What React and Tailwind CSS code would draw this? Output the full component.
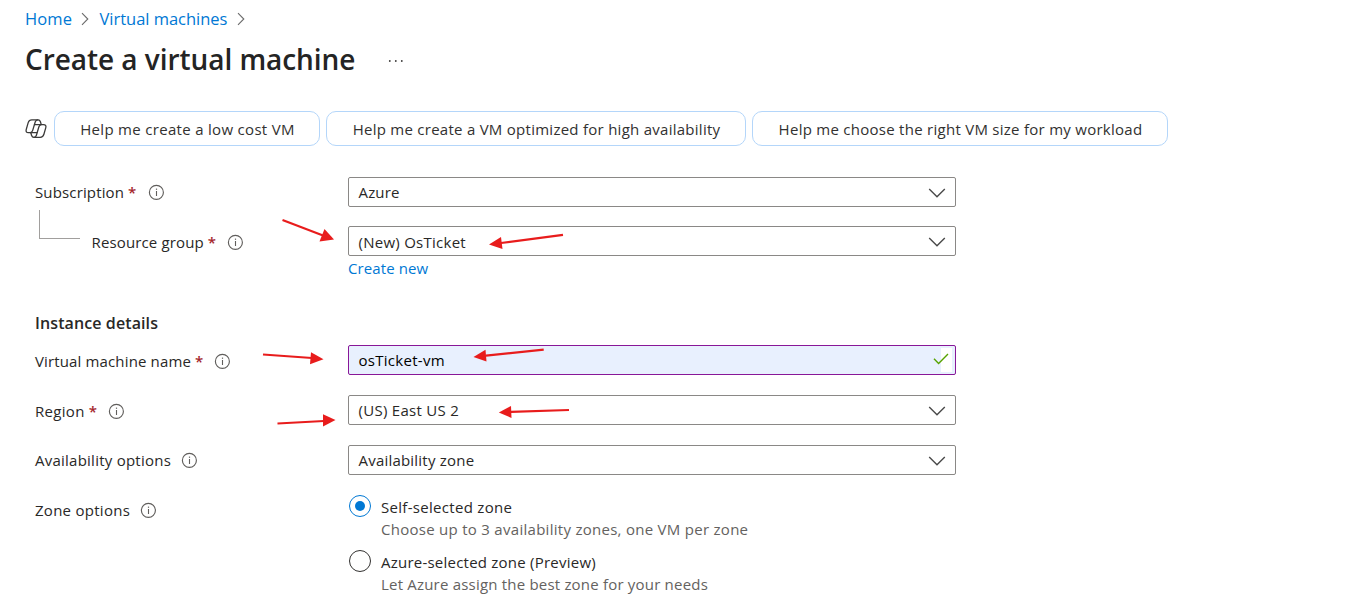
const ARROWS = [
  { line: "M282.5 220 L323 235.5", head: "334,239.5 319.5,241.5 324.5,229" },
  { line: "M563 234.8 L501 243", head: "489,244.4 501,237 502.5,249" },
  { line: "M263 354.5 L312 358", head: "323.5,359.3 310,364.3 311,352.3" },
  { line: "M543.7 349.6 L486 355.7", head: "473.5,357 485.5,349.7 486.5,361.5" },
  { line: "M277.5 423.5 L324 421", head: "335.5,420 323,426.5 323,414.3" },
  { line: "M569 410 L511 411.8", head: "498.8,412.5 511,406 511.5,418" },
];

function Arrows() {
  return (
    <svg className="pointer-events-none absolute left-0 top-0" width="1357" height="616" viewBox="0 0 1357 616" fill="#e81c1c" stroke="#e81c1c">
      {ARROWS.map((a) => (
        <g key={a.line}>
          <path d={a.line} strokeWidth="2.2" fill="none" />
          <polygon points={a.head} stroke="none" />
        </g>
      ))}
    </svg>
  );
}

function Crumb() {
  return (
    <svg className="shrink-0" width="8" height="14" viewBox="0 0 8 14" fill="none" stroke="#6b6b6b" strokeWidth="1.1">
      <path d="M1 1.2 L6.8 7 L1 12.8" />
    </svg>
  );
}

function Info() {
  return (
    <svg className="shrink-0" width="16" height="16" viewBox="0 0 16 16" fill="none" stroke="#605e5c">
      <circle cx="8.4" cy="8.4" r="7" strokeWidth="1.15" />
      <path d="M8.5 7 V12" strokeWidth="1.1" />
      <path d="M8.5 4.6 V5.8" strokeWidth="1.2" />
    </svg>
  );
}

function Chevron() {
  return (
    <svg className="mt-px shrink-0" width="18" height="10" viewBox="0 0 18 10" fill="none" stroke="#4a4a4a" strokeWidth="1.4">
      <path d="M1.2 1 L9 8.8 L16.8 1" />
    </svg>
  );
}

function Copilot() {
  return (
    <svg className="shrink-0" width="22" height="20" viewBox="0 0 22 20" fill="none" stroke="#3b3a39" strokeWidth="1.3" strokeLinejoin="round" strokeLinecap="round">
      <path d="M6.6 13.6 H3.3 C1.5 13.6 .7 12.4 1.2 10.6 L3.2 3.6 C3.8 1.7 4.9 .8 6.8 .8 H13.2 C14.6 .8 15 1.6 15.4 2.8 L16.2 5.4" />
      <path d="M12.6 .8 C11.2 .8 10.6 1.7 10.2 3 L7.7 11.4 C7.2 13 6.5 13.6 5.2 13.6" />
      <path d="M15.4 5.6 H18.4 C20.5 5.6 21.3 6.9 20.8 8.6 L18.9 15.3 C18.3 17.4 17.1 18.3 15.2 18.3 H9 C7.5 18.3 6.9 17.6 6.5 16.2 L5.8 13.6" />
      <path d="M9 18.3 C10.4 18.3 11 17.5 11.4 16.2 L13.9 7.7 C14.4 6.2 15.1 5.6 16.3 5.6" />
      <path d="M9.5 5.6 H15.4 M6.6 13.6 H12" />
    </svg>
  );
}

function Pill({ className, children }) {
  return (
    <button className={`flex h-[35px] items-center justify-center whitespace-nowrap rounded-[10px] border border-[#b4d6fa] pl-px pt-px text-[#323130] ${className}`}>
      {children}
    </button>
  );
}

function Label({ text, tracking, required, lowered }) {
  return (
    <div className={`flex h-[30px] items-center whitespace-nowrap ${lowered ? "pt-[2px]" : ""}`}>
      <span className={tracking}>{text}</span>
      {required && <span className="ml-[4px] w-[8px] font-semibold text-[#a4262c]">*</span>}
      <span className={required ? "ml-[11.5px] flex" : "ml-[10px] flex"}>
        <Info />
      </span>
    </div>
  );
}

function Row({ label, indent, children }) {
  return (
    <div className="flex">
      <div className={`w-[313px] shrink-0 ${indent ? "pl-[56.5px]" : ""}`}>{label}</div>
      {children}
    </div>
  );
}

function Select({ text, tracking, lowered }) {
  return (
    <div className="flex h-[30px] w-[608px] items-center justify-between rounded-[2px] border border-[#8a8886] pl-[9.5px] pr-[9px]">
      <span className={`${tracking} ${lowered ? "pt-[2px]" : ""}`}>{text}</span>
      <Chevron />
    </div>
  );
}

function Radio({ checked, title, titleTracking, note, noteTracking }) {
  return (
    <div className="flex h-[55px]">
      <span className={`ml-px flex size-[22px] shrink-0 items-center justify-center rounded-full border ${checked ? "border-[#0078d4]" : "border-[#323130]"}`}>
        {checked && <span className="size-[10px] rounded-full bg-[#0078d4]" />}
      </span>
      <div className="ml-[10px] whitespace-nowrap pt-px leading-[22px]">
        <div className={titleTracking}>{title}</div>
        <div className={`text-[#646260] ${noteTracking}`}>{note}</div>
      </div>
    </div>
  );
}

export default function App() {
  return (
    <div className="relative h-[616px] w-[1357px] overflow-hidden bg-white font-['Open_Sans','Noto_Sans',sans-serif] text-[15px] text-[#292827]">
      <nav className="flex h-[38px] items-center pl-[25px] text-[16.5px] text-[#0078d4]">
        <span className="w-[56px] tracking-[.1px]">Home</span>
        <Crumb />
        <span className="ml-[10.5px] w-[137.5px] whitespace-nowrap tracking-[-.02px]">Virtual machines</span>
        <Crumb />
      </nav>

      <header className="flex h-[44px] items-center pl-[25px]">
        <h1 className="w-[363px] whitespace-nowrap pb-[2px] text-[28px] font-semibold leading-[42px] tracking-[-.05px] text-[#242424]">Create a virtual machine</h1>
        <svg className="mt-[2px]" width="16" height="4" viewBox="0 0 16 4" fill="#3b3a39">
          <circle cx="1.8" cy="2" r=".9" />
          <circle cx="7.8" cy="2" r=".9" />
          <circle cx="13.8" cy="2" r=".9" />
        </svg>
      </header>

      <div className="mt-[29px] flex pl-[25px]">
        <span className="mt-[8px] w-[29px]">
          <Copilot />
        </span>
        <div className="flex gap-[6px]">
          <Pill className="w-[266px] tracking-[.31px]">Help me create a low cost VM</Pill>
          <Pill className="w-[420px] tracking-[.265px]">Help me create a VM optimized for high availability</Pill>
          <Pill className="w-[416px] tracking-[.27px]">Help me choose the right VM size for my workload</Pill>
        </div>
      </div>

      <main className="pl-[35px] pt-[31px]">
        <Row label={<Label text="Subscription" tracking="tracking-[.14px]" required />}>
          <Select text="Azure" tracking="tracking-[.15px]" />
        </Row>

        <div className="relative mt-[19px]">
          <div className="absolute left-[4px] top-[-16px] h-[29px] w-[41px] border-b border-l border-[#a19f9d]" />
          <Row indent label={<Label text="Resource group" tracking="tracking-[.14px]" required lowered />}>
            <div>
              <Select text="(New) OsTicket" tracking="tracking-[.26px]" lowered />
              <a className="block leading-[24px] tracking-[.1px] text-[#0078d4]">Create new</a>
            </div>
          </Row>
        </div>

        <h2 className="mt-[31px] h-[34px] text-[16px] font-semibold leading-[24px] tracking-[.1px]">Instance details</h2>

        <div className="flex flex-col gap-[20px]">
          <Row label={<Label text="Virtual machine name" tracking="tracking-[.14px]" required lowered />}>
            <div className="flex h-[30px] w-[608px] items-center justify-between rounded-[2px] border border-[#881798] bg-[#e8f0fe] pl-[9.5px] pr-[3px] text-black">
              <span className="tracking-[.28px]">osTicket-vm</span>
              <span className="relative h-[24px] w-[11px] bg-white">
                <svg className="absolute left-[-8px] top-[5px]" width="16" height="12" viewBox="0 0 16 12" fill="none" stroke="#57a300" strokeWidth="1.4">
                  <path d="M1 5.8 L5.6 10.4 L15 1" />
                </svg>
              </span>
            </div>
          </Row>
          <Row label={<Label text="Region" tracking="tracking-[.3px]" required lowered />}>
            <Select text="(US) East US 2" tracking="tracking-[.28px]" />
          </Row>
          <Row label={<Label text="Availability options" tracking="tracking-[.24px]" />}>
            <Select text="Availability zone" tracking="tracking-[.21px]" />
          </Row>
          <Row label={<Label text="Zone options" tracking="tracking-[.27px]" />}>
            <div>
              <Radio
                checked
                title="Self-selected zone"
                titleTracking="tracking-[.3px]"
                note="Choose up to 3 availability zones, one VM per zone"
                noteTracking="tracking-[.28px]"
              />
              <Radio
                title="Azure-selected zone (Preview)"
                titleTracking="tracking-[.23px]"
                note="Let Azure assign the best zone for your needs"
                noteTracking="tracking-[.2px]"
              />
            </div>
          </Row>
        </div>
      </main>
      <Arrows />
    </div>
  );
}
